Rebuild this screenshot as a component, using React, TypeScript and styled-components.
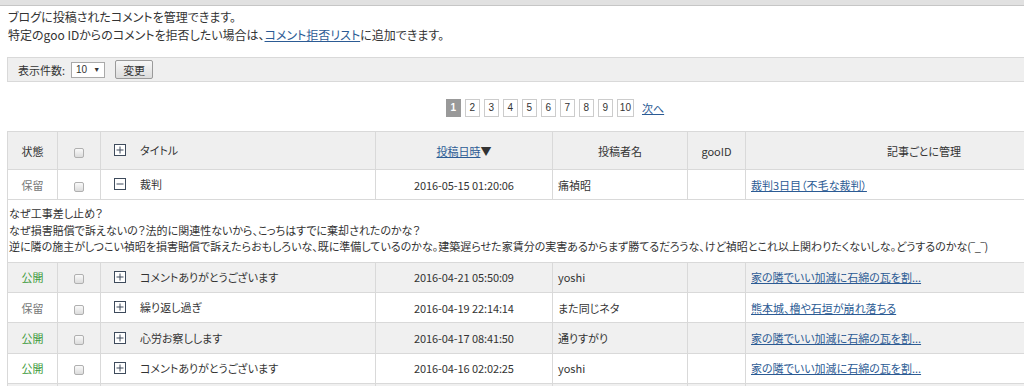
import styled, { createGlobalStyle } from "styled-components";

const GlobalStyle = createGlobalStyle`
	html,body{margin:0;padding:0;background:#fff;overflow:hidden;}
	body{font-family:"Noto Sans CJK JP","Liberation Sans",sans-serif;color:#333;font-feature-settings:"palt";}
	*{box-sizing:border-box;}
`;

type Status = "公開" | "保留" | "";

interface Row {
	status: Status;
	title: string;
	date: string;
	author: string;
	article: string;
	open?: boolean;
	body?: string[];
}

const rows: Row[] = [
	{
		status: "保留",
		title: "裁判",
		date: "2016-05-15 01:20:06",
		author: "痛禎昭",
		article: "裁判3日目（不毛な裁判）",
		open: true,
		body: [
			"なぜ工事差し止め？",
			"なぜ損害賠償で訴えないの？法的に関連性ないから、こっちはすでに棄却されたのかな？",
			"逆に隣の施主がしつこい禎昭を損害賠償で訴えたらおもしろいな、既に準備しているのかな。建築遅らせた家賃分の実害あるからまず勝てるだろうな、けど禎昭とこれ以上関わりたくないしな。どうするのかな(‾_‾)",
		],
	},
	{ status: "公開", title: "コメントありがとうございます", date: "2016-04-21 05:50:09", author: "yoshi", article: "家の隣でいい加減に石綿の瓦を割..." },
	{ status: "保留", title: "繰り返し過ぎ", date: "2016-04-19 22:14:14", author: "また同じネタ", article: "熊本城、櫓や石垣が崩れ落ちる" },
	{ status: "公開", title: "心労お察しします", date: "2016-04-17 08:41:50", author: "通りすがり", article: "家の隣でいい加減に石綿の瓦を割..." },
	{ status: "公開", title: "コメントありがとうございます", date: "2016-04-16 02:02:25", author: "yoshi", article: "家の隣でいい加減に石綿の瓦を割..." },
	{ status: "", title: "", date: "", author: "", article: "" },
];

const TopBar = styled.div`
	height:6px;background:#e1e1e1;border-bottom:1px solid #c6c6c6;
`;

const Page = styled.div`
	width:1103px;padding-left:7px;
`;

const Intro = styled.p`
	margin:0;padding:2px 0 0 1px;font-size:12px;line-height:18px;color:#333;
`;

const Link = styled.a`
	color:#2c5b94;text-decoration:underline;cursor:pointer;
`;

const Toolbar = styled.div`
	display:flex;align-items:center;gap:10px;margin-top:13px;height:25px;padding-left:10px;
	background:#efefef;border:1px solid #d9d9d9;font-size:11px;
`;

const Label = styled.span`
	margin-right:-4px;
`;

const Select = styled.span`
	display:inline-flex;align-items:center;gap:6px;height:16px;padding:0 4px;
	background:#fff;border:1px solid #a9a9a9;font-size:10px;font-family:"Liberation Sans",sans-serif;
	&::after{content:"▼";font-size:7px;}
`;

const Button = styled.span`
	display:inline-flex;align-items:center;justify-content:center;width:38px;height:19px;
	background:linear-gradient(#f7f7f7,#dcdcdc);border:1px solid #9a9a9a;border-radius:2px;font-size:11px;
`;

const Pager = styled.div`
	display:flex;justify-content:center;align-items:center;gap:4px;margin:16px 0 14px;height:19px;
`;

const PageBox = styled.span<{ $active?: boolean }>`
	display:inline-flex;align-items:center;justify-content:center;min-width:15px;height:18px;padding:0 2px;
	border:1px solid ${p => p.$active ? "#999" : "#ccc"};
	background:${p => p.$active ? "#999" : "#fff"};
	color:${p => p.$active ? "#fff" : "#333"};
	font-weight:${p => p.$active ? "bold" : "normal"};
	font-size:10px;font-family:"Liberation Sans",sans-serif;
`;

const Next = styled(Link)`
	margin-left:4px;font-size:11px;
`;

const Table = styled.table`
	width:100%;border-collapse:collapse;table-layout:fixed;font-size:11px;
	border:1px solid #d9d9d9;
`;

const Th = styled.th<{ $w?: number; $align?: string }>`
	width:${p => p.$w ? p.$w + "px" : "auto"};height:38px;padding:0 5px;
	background:#efefef;border:1px solid #d9d9d9;font-weight:normal;
	text-align:${p => p.$align || "center"};white-space:nowrap;
`;

const Tr = styled.tr<{ $shade?: boolean }>`
	background:${p => p.$shade ? "#f0f0f0" : "#fff"};
`;

const Td = styled.td<{ $align?: string }>`
	height:30.3px;padding:0 5px;border:1px solid #d9d9d9;white-space:nowrap;overflow:hidden;
	text-align:${p => p.$align || "left"};
`;

const StatusText = styled.span<{ $status: Status }>`
	color:${p => p.$status === "公開" ? "#3c9a3c" : "#777"};
`;

const DateText = styled.span`
	font-size:11px;letter-spacing:-0.1px;
`;

const BodyCell = styled.td`
	padding:5px 1px 7px;border:1px solid #d9d9d9;font-size:11px;line-height:16.5px;white-space:nowrap;
	background:#fff;
`;

const Check = styled.span`
	display:inline-block;width:10px;height:10px;vertical-align:middle;
	border:1px solid #b0b0b0;border-radius:2px;background:linear-gradient(#fafafa,#dcdcdc);
`;

const TitleWrap = styled.span`
	display:inline-flex;align-items:center;gap:14px;padding-left:8px;
`;

function Toggle({ open }: { open?: boolean }) {
	return (
		<svg width="12" height="12" viewBox="0 0 12 12">
			<rect x="0.5" y="0.5" width="11" height="11" fill="#fff" stroke="#3e4b5c" />
			<line x1="2.5" y1="6" x2="9.5" y2="6" stroke="#3e4b5c" />
			{!open && <line x1="6" y1="2.5" x2="6" y2="9.5" stroke="#3e4b5c" />}
		</svg>
	);
}

function CommentRow({ row, shade }: { row: Row; shade: boolean }) {
	return (
		<>
			<Tr $shade={shade}>
				<Td $align="center">{row.status && <StatusText $status={row.status}>{row.status}</StatusText>}</Td>
				<Td $align="center">{row.status && <Check />}</Td>
				<Td>
					{row.status && (
						<TitleWrap>
							<Toggle open={row.open} />
							{row.title}
						</TitleWrap>
					)}
				</Td>
				<Td $align="center"><DateText>{row.date}</DateText></Td>
				<Td>{row.author}</Td>
				<Td></Td>
				<Td><Link>{row.article}</Link></Td>
			</Tr>
			{row.open && row.body && (
				<tr>
					<BodyCell colSpan={7}>
						{row.body.map((line, i) => <div key={i}>{line}</div>)}
					</BodyCell>
				</tr>
			)}
		</>
	);
}

export default function App() {
	const pages = [1, 2, 3, 4, 5, 6, 7, 8, 9, 10];
	return (
		<>
			<GlobalStyle />
			<TopBar />
			<Page>
				<Intro>
					ブログに投稿されたコメントを管理できます。<br />
					特定のgoo IDからのコメントを拒否したい場合は、<Link>コメント拒否リスト</Link>に追加できます。
				</Intro>

				<Toolbar>
					<Label>表示件数:</Label>
					<Select>10</Select>
					<Button>変更</Button>
				</Toolbar>

				<Pager>
					{pages.map(n => <PageBox key={n} $active={n === 1}>{n}</PageBox>)}
					<Next>次へ</Next>
				</Pager>

				<Table>
					<thead>
						<tr>
							<Th $w={50}>状態</Th>
							<Th $w={43}><Check /></Th>
							<Th $w={275} $align="left"><TitleWrap><Toggle />タイトル</TitleWrap></Th>
							<Th $w={177}><Link>投稿日時</Link>▼</Th>
							<Th $w={135}>投稿者名</Th>
							<Th $w={58}>gooID</Th>
							<Th>記事ごとに管理</Th>
						</tr>
					</thead>
					<tbody>
						{rows.map((row, i) => <CommentRow key={i} row={row} shade={i % 2 === 1} />)}
					</tbody>
				</Table>
			</Page>
		</>
	);
}
